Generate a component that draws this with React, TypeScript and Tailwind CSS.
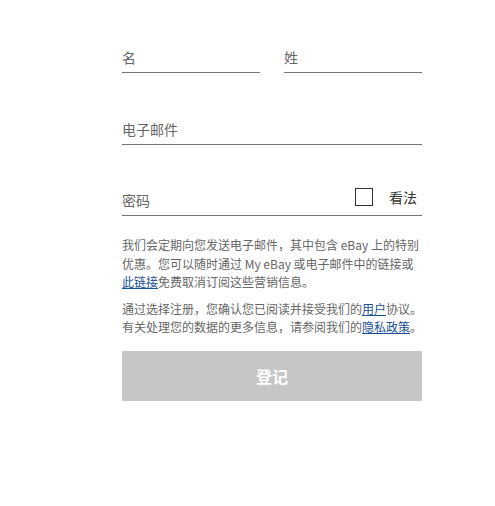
const font = "font-['Noto_Sans_CJK_SC','Liberation_Sans',sans-serif]";

const Field = ({ label, className = "" }: { label: string; className?: string }) => {
  return (
    <div className={`border-b border-[#767676] pb-[5px] ${className}`}>
      <span className="block text-[14px] leading-[20px] text-[#666]">{label}</span>
    </div>
  );
};

const App = () => {
  return (
    <div className={`w-[495px] h-[506px] bg-white ${font}`}>
      <div className="w-[300px] ml-[122px] pt-[47px]">
        <div className="flex gap-[24px]">
          <Field label="名" className="flex-1" />
          <Field label="姓" className="flex-1" />
        </div>
        <Field label="电子邮件" className="mt-[46px]" />
        <div className="mt-[42px] border-b border-[#767676] pb-[5px] flex items-end justify-between">
          <span className="block text-[14px] leading-[20px] text-[#666]">密码</span>
          <div className="flex items-center gap-[16px] pr-[5px] mb-[3px]">
            <span className="block w-[18px] h-[18px] border border-[#333] bg-white"></span>
            <span className="text-[14px] leading-[20px] text-[#333]">看法</span>
          </div>
        </div>
        <p className="mt-[20px] text-[12px] leading-[18.5px] text-[#666] whitespace-nowrap">
          <span className="block">我们会定期向您发送电子邮件，其中包含 eBay 上的特别</span>
          <span className="block">优惠。您可以随时通过 My eBay 或电子邮件中的链接或</span>
          <span className="block">
            <a className="text-[#1a4f95] underline">此链接</a>免费取消订阅这些营销信息。
          </span>
        </p>
        <p className="mt-[8px] text-[12px] leading-[18.5px] text-[#666] whitespace-nowrap">
          <span className="block">
            通过选择注册，您确认您已阅读并接受我们的<a className="text-[#1a4f95] underline">用户</a>协议。
          </span>
          <span className="block">
            有关处理您的数据的更多信息，请参阅我们的<a className="text-[#1a4f95] underline">隐私政策</a>。
          </span>
        </p>
        <button className="mt-[14px] w-full h-[50px] bg-[#c6c6c6] text-white text-[16px] font-bold">
          登记
        </button>
      </div>
    </div>
  );
};

export default App;
